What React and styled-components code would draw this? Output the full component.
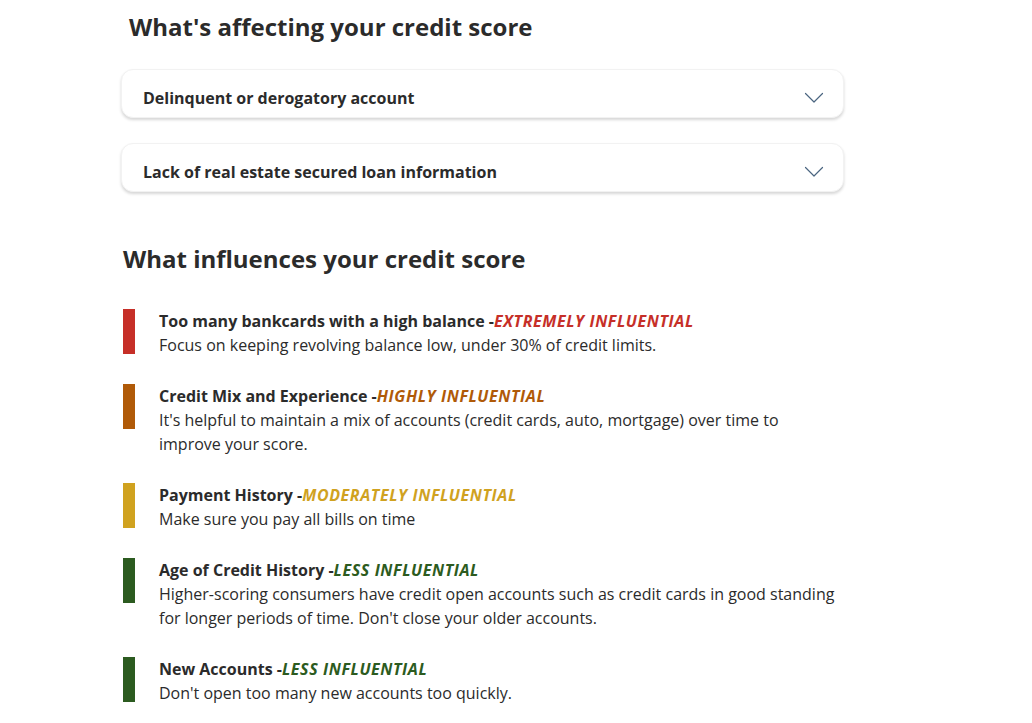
import React from 'react';
import styled, { createGlobalStyle } from 'styled-components';

const GlobalStyle = createGlobalStyle`
  body {
    margin: 0;
    background: #ffffff;
    font-family: 'Open Sans', 'Liberation Sans', sans-serif;
    color: #2b2b2b;
  }
`;

const Page = styled.div`
  width: 1032px;
  height: 723px;
  overflow: hidden;
  padding-left: 121px;
  box-sizing: border-box;
`;

const Section = styled.section`
  width: 723px;
`;

const Heading = styled.h2`
  margin: 0;
  padding-left: ${(p) => p.$indent || 0}px;
  font-size: 24px;
  line-height: 32px;
  font-weight: 700;
  color: #2b2b2b;
`;

const TopHeading = styled(Heading)`
  padding-top: 11px;
  margin-bottom: 26px;
`;

const FactorList = styled.div`
  display: flex;
  flex-direction: column;
  gap: 25px;
`;

const FactorCard = styled.button`
  all: unset;
  box-sizing: border-box;
  height: 49px;
  width: 100%;
  display: flex;
  align-items: center;
  justify-content: space-between;
  padding: 8px 19px 0 21px;
  background: #ffffff;
  border: 1px solid #f2f2f2;
  border-radius: 12px;
  box-shadow: 0 2px 3px rgba(0, 0, 0, 0.16);
  cursor: pointer;
`;

const CardLabel = styled.span`
  font-size: 16px;
  font-weight: 700;
  color: #2b2b2b;
`;

const ChevronIcon = styled.svg`
  margin-top: -1px;
`;

const Chevron = () => (
  <ChevronIcon width="20" height="11" viewBox="0 0 20 11" fill="none">
    <path d="M1.5 1.5l8.5 8.5 8.5-8.5" stroke="#4b6580" strokeWidth="1.2" strokeLinecap="round" strokeLinejoin="round" />
  </ChevronIcon>
);

const InfluenceHeading = styled(Heading)`
  margin-top: 51px;
  padding-left: 2px;
`;

const InfluenceList = styled.ul`
  list-style: none;
  margin: 34px 0 0 2px;
  padding: 0;
  width: 716px;
  display: flex;
  flex-direction: column;
  gap: 27px;
`;

const InfluenceItem = styled.li`
  display: grid;
  grid-template-columns: 12px 1fr;
  column-gap: 24px;
  align-items: start;
`;

const Bar = styled.span`
  display: block;
  height: 45px;
  background: ${(p) => p.$color};
`;

const ItemText = styled.div`
  font-size: 16px;
  line-height: 24px;
  color: #2b2b2b;
`;

const ItemTitle = styled.div`
  font-weight: 700;
`;

const Level = styled.em`
  font-style: italic;
  font-weight: 700;
  letter-spacing: 0.6px;
  color: ${(p) => p.$color};
`;

const factors = [
  'Delinquent or derogatory account',
  'Lack of real estate secured loan information',
];

const influences = [
  {
    title: 'Too many bankcards with a high balance',
    level: 'EXTREMELY INFLUENTIAL',
    color: '#c62f28',
    text: 'Focus on keeping revolving balance low, under 30% of credit limits.',
  },
  {
    title: 'Credit Mix and Experience',
    level: 'HIGHLY INFLUENTIAL',
    color: '#b05a08',
    text: "It's helpful to maintain a mix of accounts (credit cards, auto, mortgage) over time to improve your score.",
  },
  {
    title: 'Payment History',
    level: 'MODERATELY INFLUENTIAL',
    color: '#d0a21f',
    text: 'Make sure you pay all bills on time',
  },
  {
    title: 'Age of Credit History',
    level: 'LESS INFLUENTIAL',
    color: '#2c5b20',
    text: "Higher-scoring consumers have credit open accounts such as credit cards in good standing for longer periods of time. Don't close your older accounts.",
  },
  {
    title: 'New Accounts',
    level: 'LESS INFLUENTIAL',
    color: '#2c5b20',
    text: "Don't open too many new accounts too quickly.",
  },
];

const App = () => {
  return (
    <Page>
      <GlobalStyle />
      <Section>
        <TopHeading $indent={8}>What's affecting your credit score</TopHeading>
        <FactorList>
          {factors.map((f) => (
            <FactorCard key={f}>
              <CardLabel>{f}</CardLabel>
              <Chevron />
            </FactorCard>
          ))}
        </FactorList>
        <InfluenceHeading>What influences your credit score</InfluenceHeading>
        <InfluenceList>
          {influences.map((item) => (
            <InfluenceItem key={item.title}>
              <Bar $color={item.color} />
              <ItemText>
                <ItemTitle>
                  {item.title} -<Level $color={item.color}>{item.level}</Level>
                </ItemTitle>
                {item.text}
              </ItemText>
            </InfluenceItem>
          ))}
        </InfluenceList>
      </Section>
    </Page>
  );
};

export default App;
